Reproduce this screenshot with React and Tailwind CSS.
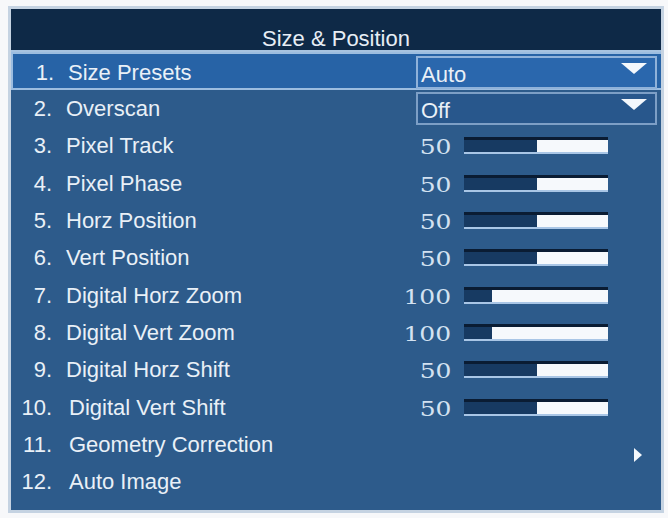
const rows = [
  { n: 1, label: "Size Presets", type: "select", value: "Auto", active: true },
  { n: 2, label: "Overscan", type: "select", value: "Off" },
  { n: 3, label: "Pixel Track", type: "slider", value: 50, fill: 73 },
  { n: 4, label: "Pixel Phase", type: "slider", value: 50, fill: 73 },
  { n: 5, label: "Horz Position", type: "slider", value: 50, fill: 73 },
  { n: 6, label: "Vert Position", type: "slider", value: 50, fill: 73 },
  { n: 7, label: "Digital Horz Zoom", type: "slider", value: 100, fill: 28 },
  { n: 8, label: "Digital Vert Zoom", type: "slider", value: 100, fill: 28 },
  { n: 9, label: "Digital Horz Shift", type: "slider", value: 50, fill: 73 },
  { n: 10, label: "Digital Vert Shift", type: "slider", value: 50, fill: 73 },
  { n: 11, label: "Geometry Correction", type: "submenu" },
  { n: 12, label: "Auto Image", type: "none" },
];

const DownArrow = () => (
  <svg width="26" height="11" viewBox="0 0 26 11" className="mt-[-8px]">
    <polygon points="0,0 26,0 13,11" fill="#f4f8fc" />
  </svg>
);

const Select = ({ value, active }) => (
  <div
    className={
      active
        ? "ml-[20px] w-[241px] h-[33px] flex items-end justify-between pl-[3px] pr-[8px] border-2 border-[#8fb2da] bg-[#2a67ad]"
        : "ml-[20px] w-[241px] h-[33px] flex items-end justify-between pl-[3px] pr-[8px] border-2 border-[#7d9fc6] bg-[#28578c]"
    }
  >
    <span className="leading-[24px]">{value}</span>
    <span className="self-center">
      <DownArrow />
    </span>
  </div>
);

// value readout uses a wide serif digit, stretched sideways
const Slider = ({ value, fill }) => (
  <div className="flex items-center">
    <span className="w-[55px] flex justify-end pt-[3px]">
      <span className="inline-block origin-right scale-x-[1.25] font-['DejaVu_Serif',serif] text-[20px] leading-[22px] text-[#d3e2f1]">
        {value}
      </span>
    </span>
    <div className="ml-[13px] w-[144px] h-[17px] flex border-t-[3px] border-[#0a1c33] border-b-2 border-b-[#a9c6e6] bg-[#f6f9fc]">
      <div className="h-full bg-[#173a62]" style={{ width: fill }} />
    </div>
  </div>
);

const Row = ({ row }) => (
  <div
    className={
      row.active
        ? "h-[38px] flex items-center bg-[#2763a6] border-2 border-[#9cbde0] border-r-0 pt-[3px]"
        : "h-[37.3px] flex items-center"
    }
  >
    <span className="w-[41px] text-right">{row.n}.</span>
    <span className={row.n >= 10 ? "flex-1 pl-[17px]" : "flex-1 pl-[14px]"}>
      {row.label}
    </span>
    <div className="w-[265px] flex items-center">
      {row.type === "select" && <Select value={row.value} active={row.active} />}
      {row.type === "slider" && <Slider value={row.value} fill={row.fill} />}
      {row.type === "submenu" && (
        <svg width="8" height="14" viewBox="0 0 8 14" className="ml-[238px] mt-[22px]">
          <polygon points="0,0 8,7 0,14" fill="#f4f8fc" />
        </svg>
      )}
    </div>
  </div>
);

export default function App() {
  return (
    <div className="w-[668px] h-[518px] bg-[#f7f8fa] pt-[6px] pl-[8px] font-['Liberation_Sans',Arial,sans-serif] text-[22px] text-[#e9f0f7]">
      <div className="w-[656px] h-[507px] border-[3px] border-[#c5d3e2] bg-[#2d5b8b] flex flex-col">
        <div className="h-[41px] bg-[#0e2947] flex items-end justify-center leading-[22px] text-[#e6edf5]">
          Size &amp; Position
        </div>
        <div className="h-[2px] bg-[#a7c3e0]" />
        {rows.map((r) => (
          <Row key={r.n} row={r} />
        ))}
      </div>
    </div>
  );
}
